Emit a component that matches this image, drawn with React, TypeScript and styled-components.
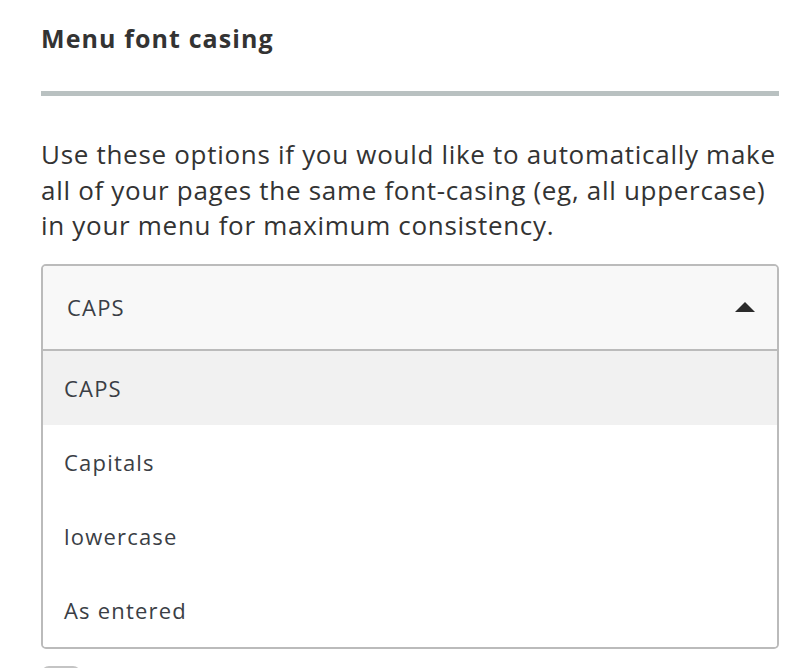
import React, {useState} from 'react';
import styled, {createGlobalStyle} from 'styled-components';

const options = ['CAPS', 'Capitals', 'lowercase', 'As entered'];

const App = () => {
  const [value, setValue] = useState('CAPS');
  const [open, setOpen] = useState(true);

  return (
    <>
      <GlobalStyle />
      <Wrapper>
        <Title>Menu font casing</Title>
        <Rule />
        <Description>
          Use these options if you would like to automatically make all of your pages the same
          font-casing (eg, all uppercase) in your menu for maximum consistency.
        </Description>
        <Select>
          <SelectHead onClick={() => setOpen(!open)}>
            <span>{value}</span>
            <Caret $open={open} />
          </SelectHead>
          {open && (
            <OptionList>
              {options.map(option => (
                <Option
                  key={option}
                  $active={option === value}
                  onClick={() => setValue(option)}
                >
                  {option}
                </Option>
              ))}
            </OptionList>
          )}
        </Select>
        <Checkbox />
      </Wrapper>
    </>
  );
};

export default App;

const GlobalStyle = createGlobalStyle`
  html, body {
    margin: 0;
    padding: 0;
    background: #FFFFFF;
    overflow: hidden;
  }
  body {
    font-family: "Open Sans", Lato, sans-serif;
    color: #333333;
  }
`;

const Wrapper = styled.div`
  width: 779px;
  height: 668px;
  overflow: hidden;
  padding: 20px 0 0 41px;
  box-sizing: border-box;
`;

const Title = styled.h2`
  margin: 0;
  font-size: 25px;
  line-height: 36px;
  letter-spacing: 1.1px;
  font-weight: 700;
  color: #333333;
`;

const Rule = styled.div`
  margin-top: 35px;
  height: 5px;
  background: #B9C1C1;
`;

const Description = styled.p`
  margin: 41px 0 0;
  font-size: 26px;
  line-height: 35.5px;
  letter-spacing: 0.7px;
  color: #333333;
`;

const Select = styled.div`
  margin-top: 20px;
  border: 2px solid #BBBBBB;
  border-radius: 5px;
  overflow: hidden;
  background: #FFFFFF;
`;

const SelectHead = styled.div`
  height: 83px;
  padding: 0 22px 0 24px;
  display: flex;
  align-items: center;
  justify-content: space-between;
  background: #F8F8F8;
  font-size: 22px;
  letter-spacing: 1.2px;
  color: #3A3E45;
  cursor: pointer;
`;

const Caret = styled.span<{$open: boolean}>`
  width: 0;
  height: 0;
  border-left: 10px solid transparent;
  border-right: 10px solid transparent;
  ${p => (p.$open ? 'border-bottom: 10px solid #2B2B2B;' : 'border-top: 10px solid #2B2B2B;')}
`;

const OptionList = styled.div`
  border-top: 2px solid #BBBBBB;
`;

const Option = styled.div<{$active: boolean}>`
  height: 74px;
  padding-left: 21px;
  display: flex;
  align-items: center;
  font-size: 22px;
  letter-spacing: 1.2px;
  color: #3A3E45;
  background: ${p => (p.$active ? '#F1F1F1' : '#FFFFFF')};
  cursor: pointer;
`;

const Checkbox = styled.div`
  margin-top: 17px;
  width: 36px;
  height: 36px;
  border: 2px solid #C4C4C4;
  border-radius: 8px;
`;
